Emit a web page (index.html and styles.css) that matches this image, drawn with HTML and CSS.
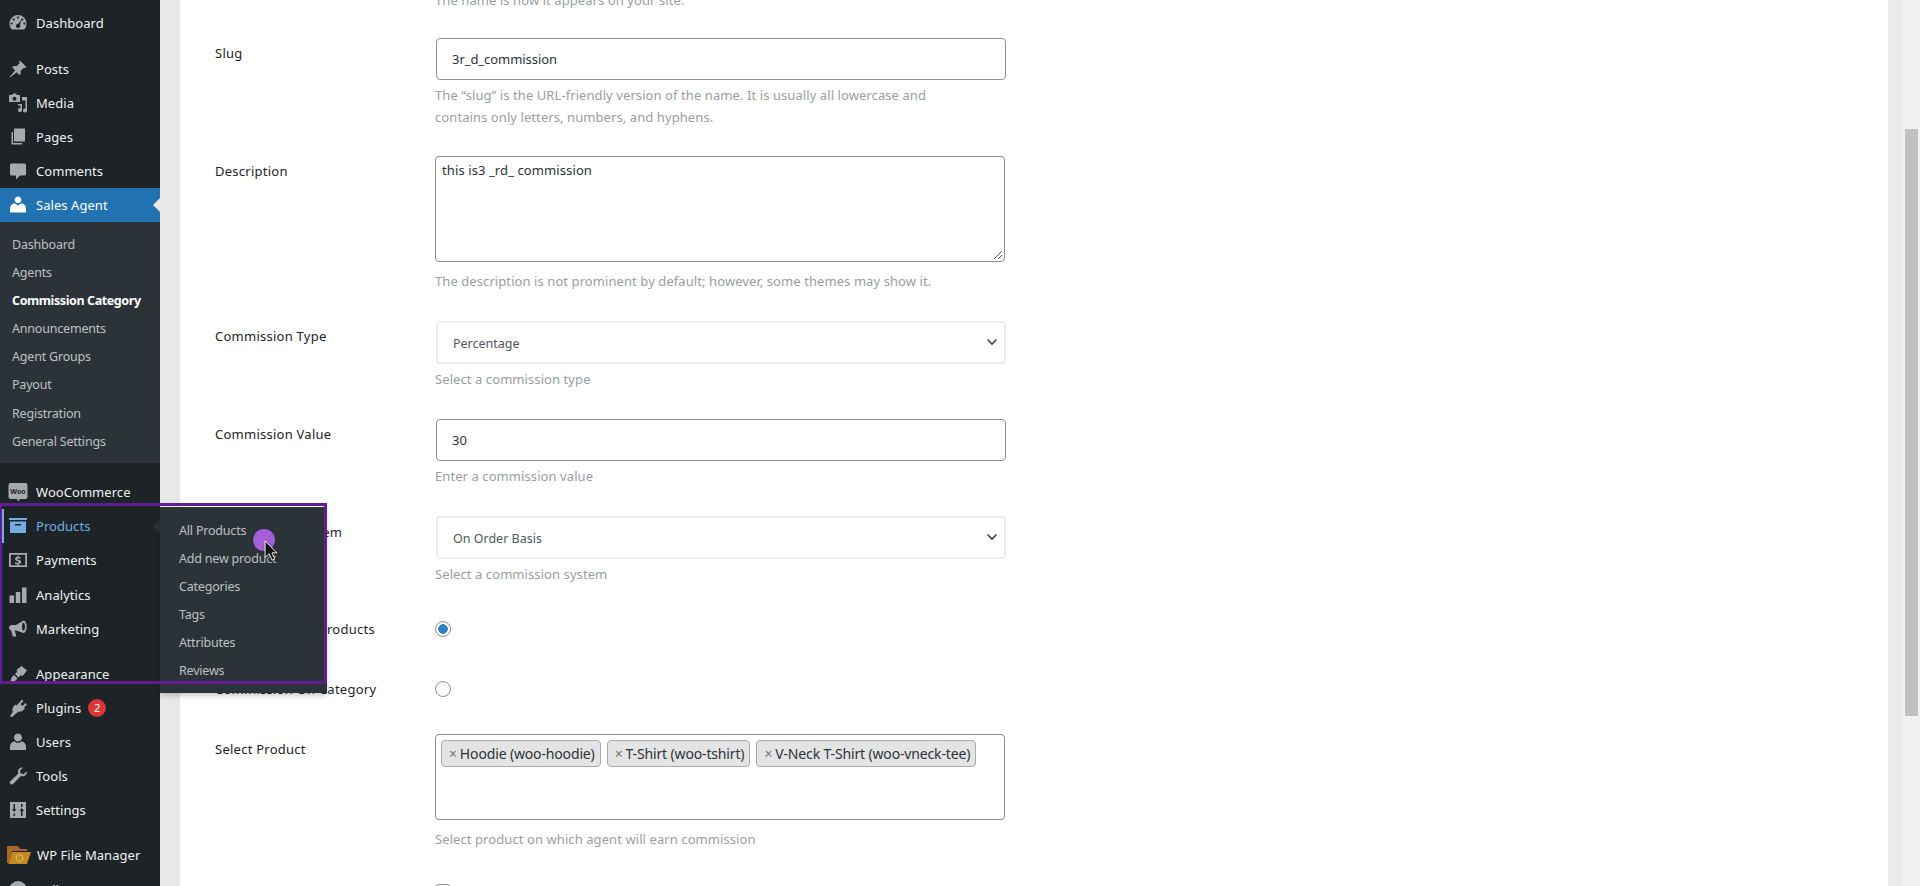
FILE: index.html
```html
<!DOCTYPE html>
<html>
<head>
<meta charset="utf-8">
<title>Edit commission category</title>
<link rel="stylesheet" href="styles.css">
</head>
<body>
<div class="page">

  <nav class="adminmenu">
    <a class="item item_first"><svg class="ico" viewBox="0 0 20 20"><path d="M3.8 16.5A8.6 8.6 0 1 1 16.2 16.5ZM10 3.6a1 1 0 1 0 .01 0ZM5.7 5.4a1 1 0 1 0 .01 0ZM14.3 5.4a1 1 0 1 0 .01 0ZM3.6 9.6a1 1 0 1 0 .01 0ZM16.4 9.6a1 1 0 1 0 .01 0ZM13.3 6.6 10.4 10.7a2.2 2.2 0 1 0 1.6 1Z" fill-rule="evenodd"/></svg>Dashboard</a>
    <a class="item item_gap"><svg class="ico" viewBox="0 0 20 20"><path d="M11.8 1.4 18.4 8l-1.4 1.2-1-.6-3.5 3.4c.6 1.6.2 3-.8 4.2l-3-3L2 18.4l-.3-.3 5.4-6.9-3-3c1.2-1 2.7-1.4 4.2-.8L11.8 3.9l-.7-1.2Z"/></svg>Posts</a>
    <a class="item"><svg class="ico" viewBox="0 0 20 20"><path d="M1 2h3l1-1.500h3L9 2h3v7H1Zm5.500 1.800a2 2 0 1 0 .01 0ZM14 4h5v13.500a2 2 0 1 1-1.500-1.900V7.500H14ZM10 11h4v6a2 2 0 1 1-1.500-1.900V12.500H10Z" fill-rule="evenodd"/></svg>Media</a>
    <a class="item"><svg class="ico" viewBox="0 0 20 20"><path d="M6 1.500h11v13H6ZM3.500 5H5v11h9v1.500H3.500Z"/></svg>Pages</a>
    <a class="item"><svg class="ico" viewBox="0 0 20 20"><path d="M3.500 2.500h13a1.500 1.500 0 0 1 1.500 1.500v9a1.500 1.500 0 0 1-1.500 1.500H12L8 18.500v-4H3.500A1.500 1.500 0 0 1 2 13V4a1.500 1.500 0 0 1 1.500-1.500Z"/></svg>Comments</a>
    <a class="item item_current"><svg class="ico" viewBox="0 0 20 20"><path d="M10 1.500a3.400 3.400 0 1 1-.01 0ZM6.500 8.300 9.300 10 10 11l.7-1 2.800-1.700c3 .6 4.500 2.600 4.500 6.200v3H2v-3c0-3.600 1.500-5.600 4.500-6.200Z"/></svg>Sales Agent</a>
    <div class="submenu">
      <a>Dashboard</a>
      <a>Agents</a>
      <a class="sub_current">Commission Category</a>
      <a>Announcements</a>
      <a>Agent Groups</a>
      <a>Payout</a>
      <a>Registration</a>
      <a>General Settings</a>
    </div>
    <a class="item"><svg class="ico" viewBox="0 0 20 20"><path d="M2.500 1h15a2 2 0 0 1 2 2v12a2 2 0 0 1-2 2H12l-2 2.500L9 17H2.500a2 2 0 0 1-2-2V3a2 2 0 0 1 2-2Z"/><text class="woo_txt" x="10" y="11.500" text-anchor="middle">Woo</text></svg>WooCommerce</a>
    <a class="item item_products"><svg class="ico ico_blue" viewBox="0 0 20 20"><path d="M1 2h18v2H1ZM2 5.500h16V17H2ZM7 8v1.500h6V8Z" fill-rule="evenodd"/></svg>Products</a>
    <a class="item"><svg class="ico" viewBox="0 0 20 20"><path d="M1 3h18v14H1Zm1.800 1.800v10.400h14.400V4.800ZM9.300 5.800h1.400v1.100c1 .1 1.700.4 2.300.8l-.7 1.300c-.6-.4-1.300-.7-2.100-.7-.6 0-1 .2-1 .6s.4.6 1.400.9c1.600.4 2.500 1 2.500 2.300 0 1.100-.8 1.900-2.400 2.100v1H9.300v-1c-1.100-.1-2-.5-2.600-1l.8-1.300c.7.5 1.500.9 2.400.9.700 0 1.100-.3 1.100-.7s-.4-.6-1.400-.9C8 10.600 7.100 10 7.100 8.800c0-1 .8-1.800 2.200-2Z" fill-rule="evenodd"/></svg>Payments</a>
    <a class="item"><svg class="ico" viewBox="0 0 20 20"><path d="M1.500 10.500h4.500V18H1.500ZM7.800 7h4.500v11H7.800ZM14 2.500h4.500V18H14Z"/></svg>Analytics</a>
    <a class="item"><svg class="ico" viewBox="0 0 20 20"><path d="M15.500 1.500c1.700 0 3.200 2.800 3.200 6.200s-1.500 6.200-3.200 6.200L8 11.500H6.800l1.500 6h-3.500L3 11.300C1.800 10.900 1 9.900 1 8.700c0-1.500 1.200-2.700 2.700-2.700H8Zm0 2.300c-.8 0-1.500 1.800-1.500 3.900s.7 3.900 1.500 3.900 1.500-1.800 1.500-3.900-.7-3.900-1.500-3.900Z" fill-rule="evenodd"/></svg>Marketing</a>
    <a class="item item_appearance"><svg class="ico" viewBox="0 0 20 20"><path d="M13.500 2 19 6.500 14.500 12l-1.800-.7-2.200 2.200L7 10l2.200-2.200-.7-1.800ZM6 11l3.500 3.500-2 2C6 18 3.500 19 1 19c1.500-1.500 2-3 2.500-5.500Z"/></svg>Appearance</a>
    <a class="item"><svg class="ico" viewBox="0 0 20 20"><path d="M14 1.500 15.500 3l-3 3 2 2 3-3L19 6.500l-3 3 1 1-1.500 1.500c-1.500 1.500-3.500 2-5 1.500L7.500 16 4 19H2.500v-1.500L5 13.500l-.5-.5c-.5-1.500 0-3.500 1.500-5l1.500-1.500 1 1Z"/></svg>Plugins<span class="badge">2</span></a>
    <a class="item"><svg class="ico" viewBox="0 0 20 20"><path d="M10 1.500a4 4 0 1 1-.01 0ZM6.500 9.300c1 1 2.200 1.500 3.500 1.500s2.500-.5 3.500-1.500c2.700.7 4.500 2.700 4.500 5.200v3.500H2v-3.500c0-2.500 1.800-4.500 4.500-5.200Z"/></svg>Users</a>
    <a class="item"><svg class="ico" viewBox="0 0 20 20"><path d="M15 1.500c-2.800-.6-5.300 1.700-5 4.500.1.500.2 1 .4 1.400L2.500 15c-1 1-1 2.200-.2 3s2 .7 3-.2l7.600-7.900c.4.200.9.300 1.400.4 2.800.3 5.100-2.200 4.500-5l-3.300 3-2.800-.7-.7-2.800Z"/></svg>Tools</a>
    <a class="item"><svg class="ico" viewBox="0 0 20 20"><path d="M2 2h16v16H2ZM5.500 4v5H4l2.200 3L8.400 9H7V4ZM5.500 13.500V16H7v-2.500ZM13 16h1.500v-5H16l-2.200-3-2.200 3H13ZM13 4v3h1.500V4Z" fill-rule="evenodd"/></svg>Settings</a>
    <a class="item item_fm"><svg class="ico_fm" viewBox="0 0 24 20"><path fill="#a8662a" d="M0 1h11l2 3h7v2H5L2 18H0Z"/><path fill="#c48a20" d="M5 7h19l-4 12H1.500Z"/><circle cx="12.500" cy="13" r="3.500" fill="none" stroke="#e0c080"/></svg>WP File Manager</a>
    <a class="item"><svg class="ico" viewBox="0 0 20 20"><circle cx="10" cy="10" r="9"/></svg>Collapse</a>

    <div class="flyout">
      <a>All Products</a>
      <a>Add new product</a>
      <a>Categories</a>
      <a>Tags</a>
      <a>Attributes</a>
      <a>Reviews</a>
    </div>
  </nav>

  <div class="gutter"></div>

  <main class="panel">
    <form class="form">
      <div class="row row_top">
        <label></label>
        <div class="field"><p class="hint">The name is how it appears on your site.</p></div>
      </div>

      <div class="row row_slug">
        <label>Slug</label>
        <div class="field">
          <div class="input">3r_d_commission</div>
          <p class="hint">The “slug” is the URL-friendly version of the name. It is usually all lowercase and<br>contains only letters, numbers, and hyphens.</p>
        </div>
      </div>

      <div class="row row_desc">
        <label>Description</label>
        <div class="field">
          <div class="textarea">this is3 _rd_ commission
            <svg class="grip" viewBox="0 0 10 10"><path d="M9 1 1 9M9 5 5 9" stroke="#555" fill="none"/></svg>
          </div>
          <p class="hint">The description is not prominent by default; however, some themes may show it.</p>
        </div>
      </div>

      <div class="row row_type">
        <label>Commission Type</label>
        <div class="field">
          <div class="select">Percentage<svg class="chev" viewBox="0 0 12 8"><path d="M1.500 1.500 6 6l4.500-4.500" fill="none" stroke="#444" stroke-width="1.600"/></svg></div>
          <p class="hint">Select a commission type</p>
        </div>
      </div>

      <div class="row row_value">
        <label>Commission Value</label>
        <div class="field">
          <div class="input">30</div>
          <p class="hint">Enter a commission value</p>
        </div>
      </div>

      <div class="row row_system">
        <label>Commission System</label>
        <div class="field">
          <div class="select">On Order Basis<svg class="chev" viewBox="0 0 12 8"><path d="M1.500 1.500 6 6l4.500-4.500" fill="none" stroke="#444" stroke-width="1.600"/></svg></div>
          <p class="hint">Select a commission system</p>
        </div>
      </div>

      <div class="row row_radio">
        <label>Commission On Products</label>
        <div class="field"><span class="radio radio_on"></span></div>
      </div>

      <div class="row row_radio2">
        <label>Commission On Category</label>
        <div class="field"><span class="radio"></span></div>
      </div>

      <div class="row row_product">
        <label>Select Product</label>
        <div class="field">
          <div class="multi">
            <span class="tag"><i>×</i>Hoodie (woo-hoodie)</span>
            <span class="tag"><i>×</i>T-Shirt (woo-tshirt)</span>
            <span class="tag"><i>×</i>V-Neck T-Shirt (woo-vneck-tee)</span>
          </div>
          <p class="hint">Select product on which agent will earn commission</p>
        </div>
      </div>

      <div class="row">
        <label></label>
        <div class="field"><span class="check"></span></div>
      </div>
    </form>
  </main>

  <div class="gutter gutter_right"></div>
  <div class="scrollbar"><div class="thumb"></div></div>

  <div class="outline"></div>
  <div class="pointer_dot"></div>
  <svg class="pointer" viewBox="0 0 16 24"><path d="M1 1v18l4.500-4 3 7 3-1.300-3-6.700H14Z" fill="#111" stroke="#fff" stroke-width="1"/></svg>
</div>
</body>
</html>
```
FILE: styles.css
```css
html, body {
  margin: 0;
  height: 100%;
  overflow: hidden;
}
body {
  font-family: "Noto Sans", "Open Sans", sans-serif;
  font-size: 13px;
  color: #2c3338;
  background: #fff;
}
.page {
  position: relative;
  display: flex;
  height: 886px;
  overflow: hidden;
}

/* admin menu */
.adminmenu {
  position: relative;
  width: 160px;
  flex: none;
  background: #1d2327;
  color: #f0f0f1;
  margin-top: -6px;
}
.adminmenu a {
  display: block;
}
.adminmenu .item {
  display: flex;
  align-items: center;
  height: 34px;
  letter-spacing: 0.05px;
  box-sizing: border-box;
}
.adminmenu .submenu ~ .item {
  height: 34.2px;
}
.ico {
  width: 20px;
  height: 20px;
  margin: 0 8px 0 8px;
  fill: #a7aaad;
  flex: none;
}
.adminmenu .item_first {
  height: 46px;
  padding-top: 12px;
}
.item_gap {
  margin-top: 12px;
}
.item_current {
  position: relative;
  background: #2271b1;
  color: #fff;
}
.item_current .ico {
  fill: #fff;
}
.item_current::after {
  content: "";
  position: absolute;
  right: 0;
  top: 10px;
  border: 7px solid transparent;
  border-right-color: #e9e8e9;
  border-left: 0;
}
.submenu {
  background: #2c3338;
  height: 241px;
  padding-top: 8.5px;
  box-sizing: border-box;
  margin-bottom: 12px;
}
.submenu a {
  height: 28.2px;
  line-height: 28px;
  padding-left: 12px;
  font-size: 12.5px;
  letter-spacing: -0.2px;
  color: #bcc0c3;
}
.submenu .sub_current {
  color: #fff;
  font-weight: 700;
  letter-spacing: -0.4px;
}
.item_products {
  position: relative;
  color: #72aee6;
}
.item_products::before {
  content: "";
  position: absolute;
  left: 2px;
  top: 0;
  bottom: 0;
  width: 2px;
  background: #72aee6;
}
.item_products::after {
  content: "";
  position: absolute;
  right: 0;
  top: 10px;
  border: 7px solid transparent;
  border-right-color: #2c3338;
  border-left: 0;
}
.ico_blue {
  fill: #72aee6;
}
.woo_txt {
  font-size: 7px;
  font-weight: 700;
  fill: #1d2327;
  letter-spacing: 0;
}
.item_appearance {
  margin-top: 10.5px;
}
.item_fm {
  margin-top: 11px;
}
.ico_fm {
  width: 24px;
  height: 20px;
  margin: 0 6px 0 7px;
  flex: none;
}
.badge {
  width: 18px;
  height: 18px;
  line-height: 18px;
  margin-left: 7px;
  border-radius: 50%;
  background: #d63638;
  color: #fff;
  font-size: 11px;
  text-align: center;
}
.flyout {
  position: absolute;
  left: 160px;
  top: 513px;
  width: 167px;
  height: 186px;
  padding-top: 9.5px;
  box-sizing: border-box;
  background: #2c3338;
  box-shadow: 0 3px 5px rgba(0, 0, 0, .2);
  z-index: 5;
}
.flyout a {
  height: 28.2px;
  line-height: 28px;
  padding-left: 19px;
  font-size: 12.5px;
  letter-spacing: -0.2px;
  color: #bcc0c3;
}

.gutter {
  width: 20px;
  flex: none;
  background: #e9e8e9;
}
.gutter_right {
  width: 15px;
  background: #ebebeb;
}

/* form */
.panel {
  flex: 1;
  background: #fff;
  overflow: hidden;
}
.form {
  padding-left: 35px;
}
.row {
  display: flex;
}
.row label {
  width: 220px;
  flex: none;
  color: #1d2327;
  line-height: 20px;
  letter-spacing: 0.25px;
}
.field {
  width: 571px;
}
.hint {
  margin: 0;
  font-size: 13px;
  line-height: 22px;
  letter-spacing: 0.08px;
  color: #9a9da1;
}
.input {
  height: 42px;
  box-sizing: border-box;
  margin-left: 1px;
  border: 1px solid #8c8f94;
  border-radius: 4px;
  padding-left: 15px;
  line-height: 40px;
  letter-spacing: -0.05px;
  color: #2c3338;
}
.input + .hint {
  margin-top: 4px;
}
.textarea {
  position: relative;
  height: 106px;
  width: 570px;
  box-sizing: border-box;
  border: 1px solid #8c8f94;
  border-radius: 4px;
  padding: 3px 6px;
  line-height: 20px;
  letter-spacing: 0.1px;
}
.textarea + .hint {
  margin-top: 8px;
}
.grip {
  position: absolute;
  right: 1px;
  bottom: 1px;
  width: 10px;
  height: 10px;
}
.select {
  position: relative;
  height: 43px;
  box-sizing: border-box;
  margin-left: 1px;
  border: 2px solid #ededed;
  border-radius: 3px;
  padding-left: 15px;
  line-height: 41px;
  font-size: 12.5px;
  color: #50575e;
}
.select + .hint {
  margin-top: 4px;
}
.chev {
  position: absolute;
  right: 6px;
  top: 15px;
  width: 12px;
  height: 8px;
}
.radio {
  display: block;
  width: 16px;
  height: 16px;
  margin-top: 2px;
  box-sizing: border-box;
  border: 1px solid #8c8f94;
  border-radius: 50%;
  background: #fff;
}
.radio_on {
  background: radial-gradient(circle, #2f7fc9 0 4.5px, #fff 5px);
}
.multi {
  width: 570px;
  height: 86px;
  box-sizing: border-box;
  border: 1px solid #8c8f94;
  border-radius: 4px;
  padding: 5px;
  display: flex;
  align-items: flex-start;
  gap: 6px;
}
.multi + .hint {
  margin-top: 8px;
}
.tag {
  height: 27px;
  box-sizing: border-box;
  border: 1px solid #aaa;
  border-radius: 4px;
  background: #e4e4e4;
  padding: 0 5px 0 7px;
  font-size: 14px;
  line-height: 25px;
  letter-spacing: -0.15px;
  white-space: nowrap;
  color: #2c3338;
}
.tag i {
  font-style: normal;
  color: #777;
  margin-right: 3px;
}
.check {
  display: block;
  width: 16px;
  height: 16px;
  box-sizing: border-box;
  border: 1px solid #8c8f94;
  border-radius: 4px;
}

/* vertical rhythm of the rows */
.row_top { height: 49px; margin-top: -11px; }
.row_slug { height: 118px; }
.row_slug label { padding-top: 5px; }
.row_desc { height: 165px; }
.row_desc label { padding-top: 5px; }
.row_type { height: 98px; }
.row_type label { padding-top: 5px; }
.row_value { height: 97px; }
.row_value label { padding-top: 5px; }
.row_system { height: 103px; }
.row_system label { padding-top: 6px; }
.row_radio { height: 60px; }
.row_radio2 { height: 55px; }
.row_product { height: 150px; }
.row_product label { padding-top: 5px; }

/* scrollbar */
.scrollbar {
  width: 17px;
  flex: none;
  background: #f1f1f1;
  padding-top: 129px;
  box-sizing: border-box;
}
.thumb {
  width: 13px;
  height: 587px;
  margin-left: 2px;
  background: #c1c1c1;
}

/* recording overlay */
.outline {
  position: absolute;
  left: 0;
  top: 503px;
  width: 327px;
  height: 181px;
  box-sizing: border-box;
  border: 3px solid #5f1f91;
  border-left-width: 2px;
  z-index: 6;
}
.pointer_dot {
  position: absolute;
  left: 253px;
  top: 529px;
  width: 22px;
  height: 22px;
  border-radius: 50%;
  background: #a55fd8;
  z-index: 7;
}
.pointer {
  position: absolute;
  left: 264px;
  top: 540px;
  width: 15px;
  height: 22px;
  filter: drop-shadow(1px 2px 2px rgba(0, 0, 0, .4));
  z-index: 8;
}
```
